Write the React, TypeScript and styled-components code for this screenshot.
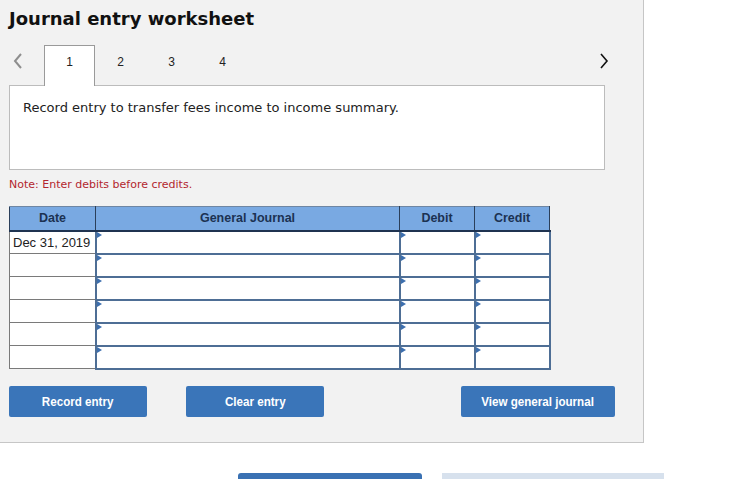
import React from 'react';
import styled, { createGlobalStyle } from 'styled-components';

const GlobalStyle = createGlobalStyle`
  html, body {
    margin: 0;
    padding: 0;
    background: #ffffff;
  }
  * {
    box-sizing: border-box;
  }
`;

const Panel = styled.div`
  width: 644px;
  height: 443px;
  padding: 8px 0 0 9px;
  background: #f2f2f2;
  border-right: 1px solid #c6c6c6;
  border-bottom: 1px solid #c6c6c6;
`;

const Title = styled.h1`
  margin: 0 0 15px;
  height: 22px;
  font-family: 'DejaVu Sans', Verdana, sans-serif;
  font-size: 18px;
  line-height: 22px;
  font-weight: bold;
  color: #111;
`;

const TabRow = styled.div`
  display: flex;
  align-items: flex-start;
  width: 596px;
  height: 41px;
  margin-bottom: -1px;
`;

const Arrow = styled.button<{ $side: 'left' | 'right' }>`
  display: flex;
  padding: 0;
  margin: 0;
  border: 0;
  background: transparent;
  width: ${(p) => (p.$side === 'left' ? '35px' : '12px')};
  margin-left: ${(p) => (p.$side === 'right' ? 'auto' : '0')};
  margin-right: ${(p) => (p.$side === 'right' ? '-6px' : '0')};
  padding-top: 8px;
  padding-left: ${(p) => (p.$side === 'left' ? '4px' : '0')};
  cursor: pointer;
`;

const Tab = styled.div<{ $active?: boolean }>`
  position: relative;
  z-index: 1;
  width: 51px;
  height: 41px;
  padding-top: 9px;
  text-align: center;
  font-family: 'Liberation Sans', Arial, sans-serif;
  font-size: 12px;
  line-height: 14px;
  color: #222;
  background: ${(p) => (p.$active ? '#ffffff' : 'transparent')};
  border: 1px solid ${(p) => (p.$active ? '#9a9a9a' : 'transparent')};
  border-bottom: 0;
`;

const Prompt = styled.div`
  width: 596px;
  height: 85px;
  padding: 14px 13px 0;
  background: #ffffff;
  border: 1px solid #bcbcbc;
  font-family: 'DejaVu Sans', Verdana, sans-serif;
  font-size: 13px;
  line-height: 16px;
  color: #222;
`;

const Note = styled.div`
  margin-top: 8px;
  font-family: 'DejaVu Sans', Verdana, sans-serif;
  font-size: 11px;
  line-height: 14px;
  color: #b3262e;
`;

const Journal = styled.table`
  margin-top: 14px;
  border-collapse: collapse;
  table-layout: fixed;
  width: 540px;
`;

const HeadCell = styled.th<{ $w: number }>`
  width: ${(p) => p.$w}px;
  height: 24px;
  padding: 0;
  background: #79a9e2;
  border: 1px solid #2b3f5a;
  border-bottom: 2px solid #1f3350;
  border-top-color: #6f86a3;
  font-family: 'Liberation Sans', Arial, sans-serif;
  font-size: 12.5px;
  font-weight: bold;
  color: #1c3252;
  text-align: center;
`;

const DateCell = styled.td`
  height: 23px;
  padding: 0 0 0 3px;
  background: #ffffff;
  border: 1px solid #7a7a7a;
  font-family: 'Liberation Sans', Arial, sans-serif;
  font-size: 13px;
  color: #222;
  white-space: nowrap;
`;

const InputCell = styled.td`
  position: relative;
  height: 23px;
  padding: 0;
  background: #ffffff;
  border: 2px solid #4e6e95;
`;

const Marker = styled.span`
  position: absolute;
  top: 0;
  left: 0;
  width: 0;
  height: 0;
  border-top: 3px solid transparent;
  border-bottom: 3px solid transparent;
  border-left: 5px solid #3d6fae;
`;

const ButtonRow = styled.div`
  display: flex;
  width: 606px;
  margin-top: 16px;
  gap: 39px;
`;

const ActionButton = styled.button<{ $w: number; $push?: boolean }>`
  display: flex;
  align-items: center;
  justify-content: center;
  width: ${(p) => p.$w}px;
  height: 31px;
  margin-left: ${(p) => (p.$push ? 'auto' : '0')};
  padding: 0;
  border: 0;
  border-radius: 2px;
  background: #3a75b9;
  color: #ffffff;
  cursor: pointer;
`;

// narrow bold label; no condensed family is installed, so squeeze Arial metrics
const ButtonLabel = styled.span`
  display: inline-block;
  font-family: 'Liberation Sans', Arial, sans-serif;
  font-size: 13.5px;
  font-weight: bold;
  white-space: nowrap;
  transform: scaleX(0.86);
`;

const Footer = styled.div`
  display: flex;
  gap: 20px;
  margin-top: 30px;
  padding-left: 238px;
`;

const FooterBar = styled.div<{ $w: number; $tone: 'dark' | 'light' }>`
  width: ${(p) => p.$w}px;
  height: 6px;
  background: ${(p) => (p.$tone === 'dark' ? '#3a71b3' : '#d7e1ed')};
  border-radius: ${(p) => (p.$tone === 'dark' ? '3px 3px 0 0' : '0')};
`;

function LeftChevron() {
  return (
    <svg width="10" height="16" viewBox="0 0 10 16">
      <polyline points="8,1 2,8 8,15" fill="none" stroke="#8e8e8e" strokeWidth="2" />
    </svg>
  );
}

function RightChevron() {
  return (
    <svg width="10" height="16" viewBox="0 0 10 16">
      <polyline points="2,1 8,8 2,15" fill="none" stroke="#111" strokeWidth="1.6" />
    </svg>
  );
}

const rows = ['Dec 31, 2019', '', '', '', '', ''];

export default function App() {
  return (
    <>
      <GlobalStyle />
      <Panel>
        <Title>Journal entry worksheet</Title>
        <TabRow>
          <Arrow $side="left">
            <LeftChevron />
          </Arrow>
          <Tab $active>1</Tab>
          <Tab>2</Tab>
          <Tab>3</Tab>
          <Tab>4</Tab>
          <Arrow $side="right">
            <RightChevron />
          </Arrow>
        </TabRow>
        <Prompt>Record entry to transfer fees income to income summary.</Prompt>
        <Note>Note: Enter debits before credits.</Note>
        <Journal>
          <thead>
            <tr>
              <HeadCell $w={86}>Date</HeadCell>
              <HeadCell $w={304}>General Journal</HeadCell>
              <HeadCell $w={75}>Debit</HeadCell>
              <HeadCell $w={75}>Credit</HeadCell>
            </tr>
          </thead>
          <tbody>
            {rows.map((date, i) => (
              <tr key={i}>
                <DateCell>{date}</DateCell>
                <InputCell>
                  <Marker />
                </InputCell>
                <InputCell>
                  <Marker />
                </InputCell>
                <InputCell>
                  <Marker />
                </InputCell>
              </tr>
            ))}
          </tbody>
        </Journal>
        <ButtonRow>
          <ActionButton $w={138}>
            <ButtonLabel>Record entry</ButtonLabel>
          </ActionButton>
          <ActionButton $w={138}>
            <ButtonLabel>Clear entry</ButtonLabel>
          </ActionButton>
          <ActionButton $w={154} $push>
            <ButtonLabel>View general journal</ButtonLabel>
          </ActionButton>
        </ButtonRow>
      </Panel>
      <Footer>
        <FooterBar $w={184} $tone="dark" />
        <FooterBar $w={222} $tone="light" />
      </Footer>
    </>
  );
}
